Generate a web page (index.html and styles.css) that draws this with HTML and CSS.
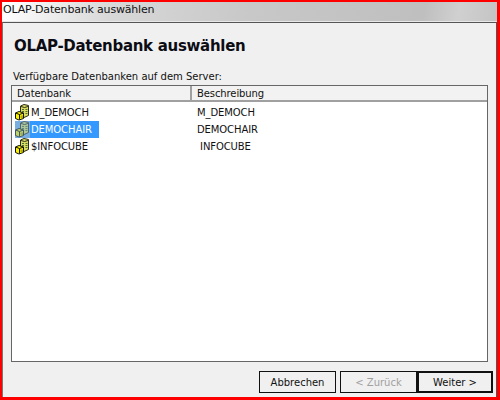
FILE: index.html

```html
<!DOCTYPE html>
<html>
<head>
<meta charset="utf-8">
<title>OLAP-Datenbank auswählen</title>
<link rel="stylesheet" href="styles.css">
</head>
<body>
<div class="window">
    <div class="title-bar">OLAP-Datenbank auswählen</div>
    <div class="dialog">
        <h1 class="heading">OLAP-Datenbank auswählen</h1>
        <div class="list-label">Verfügbare Datenbanken auf dem Server:</div>
        <div class="list-view">
            <div class="list-head">
                <div class="col-name">Datenbank</div>
                <div class="col-desc">Beschreibung</div>
            </div>
            <div class="list-row">
                <div class="col-name">
                    <svg class="db-icon" viewBox="0 0 15 17"><use href="#cube"/></svg>
                    <span class="row-text">M_DEMOCH</span>
                </div>
                <div class="col-desc">M_DEMOCH</div>
            </div>
            <div class="list-row selected">
                <div class="col-name">
                    <svg class="db-icon" viewBox="0 0 15 17"><use href="#cube"/></svg>
                    <span class="row-text">DEMOCHAIR</span>
                </div>
                <div class="col-desc">DEMOCHAIR</div>
            </div>
            <div class="list-row">
                <div class="col-name">
                    <svg class="db-icon" viewBox="0 0 15 17"><use href="#cube"/></svg>
                    <span class="row-text">$INFOCUBE</span>
                </div>
                <div class="col-desc">&nbsp;INFOCUBE</div>
            </div>
        </div>
        <div class="button-row">
            <button class="btn">Abbrechen</button>
            <div class="btn-pair">
                <button class="btn" disabled>&lt; Zurück</button>
                <button class="btn default">Weiter &gt;</button>
            </div>
        </div>
    </div>
</div>

<svg class="defs" width="0" height="0">
    <defs>
        <g id="cube">
            <!-- back tower -->
            <path d="M5.5 2 L9 0.5 L13.5 1.5 V11.5 L9 13.5 H5.5 Z" fill="#d9dc62" stroke="#2c2c18"/>
            <path d="M6 2.5 L9.5 3.5 L13 2.5" fill="none" stroke="#2c2c18"/>
            <path d="M7 5.5 h2 M7 7.5 h2 M10.5 5.5 h2 M10.5 7.5 h2 M10.5 9.5 h2" stroke="#4f6b2c"/>
            <!-- front cube -->
            <path d="M0.5 9 L4 7.5 L8.5 9 V14.5 L4 16 L0.5 14.5 Z" fill="#fbf200" stroke="#111108"/>
            <path d="M0.5 9 L4.5 10.5 L8.5 9 M4.5 10.5 V15.5" fill="none" stroke="#111108"/>
            <path d="M5.5 11.5 h2.5 v2.5 h-2.5 z" fill="#b5ab00"/>
        </g>
    </defs>
</svg>
</body>
</html>
```

FILE: styles.css

```css
* {
    box-sizing: border-box;
}

html, body {
    margin: 0;
    height: 100%;
}

body {
    font-family: "DejaVu Sans", sans-serif;
    font-size: 10px;
    color: #111;
}

.window {
    width: 500px;
    height: 400px;
    border: 2px solid #f00;
    border-right-width: 3px;
    border-bottom-width: 3px;
    display: flex;
    flex-direction: column;
    background: #f0f0f0;
}

.title-bar {
    height: 20px;
    padding-left: 1px;
    font-size: 11px;
    line-height: 15px;
    letter-spacing: -0.18px;
    color: #111;
    background: linear-gradient(100deg, #fff 0, #d8d8d8 22%, #c8c8c8 50%, #bfbfbf 85%, #d0d0d0 92%, #c4c4c4 100%);
    border-bottom: 1px solid #e8e8e8;
}

.dialog {
    flex: 1;
    display: flex;
    flex-direction: column;
    min-height: 0;
    padding: 13px 3px 4px 8px;
    border-top: 1px solid #555;
    border-left: 1px solid #777;
    border-right: 1px solid #555;
}

.heading {
    margin: 0 0 0 3px;
    font-size: 15px;
    line-height: 20px;
    font-weight: bold;
    letter-spacing: -0.3px;
    color: #0c0c14;
}

.list-label {
    margin: 14px 0 2px 2px;
    line-height: 13px;
}

.list-view {
    flex: 1;
    margin-right: 5px;
    background: #fff;
    border: 1px solid #666;
    letter-spacing: -0.1px;
}

.list-head {
    display: flex;
    height: 16px;
    margin-bottom: 2px;
    line-height: 15px;
    background: #f2f2f2;
    border-bottom: 2px solid #a0a0a0;
}

.list-head .col-name {
    border-right: 2px solid #a0a0a0;
    padding-left: 5px;
}

.col-name {
    width: 180px;
    flex: none;
}

.col-desc {
    padding-left: 5px;
}

.list-row {
    display: flex;
    align-items: center;
    height: 17px;
}

.list-row .col-name {
    display: flex;
    align-items: center;
    padding-left: 3px;
}

.db-icon {
    width: 15px;
    height: 17px;
    flex: none;
}

.row-text {
    padding: 0 7px 0 1px;
    line-height: 17px;
}

.selected .row-text {
    background: #3399ff;
    color: #fff;
}

.selected .db-icon {
    background: #79aee0;
}

.selected .db-icon use {
    opacity: 0.55;
}

.button-row {
    display: flex;
    justify-content: flex-end;
    gap: 4px;
    margin-top: 9px;
}

.btn-pair {
    display: flex;
}

.btn {
    width: 77px;
    height: 22px;
    padding: 0;
    font: inherit;
    color: #111;
    background: #f0f0f0;
    border: 1px solid #111;
}

.btn:disabled {
    color: #a0a0a0;
}

.btn.default {
    width: 76px;
    border-width: 2px;
}

.defs {
    position: absolute;
}
```
